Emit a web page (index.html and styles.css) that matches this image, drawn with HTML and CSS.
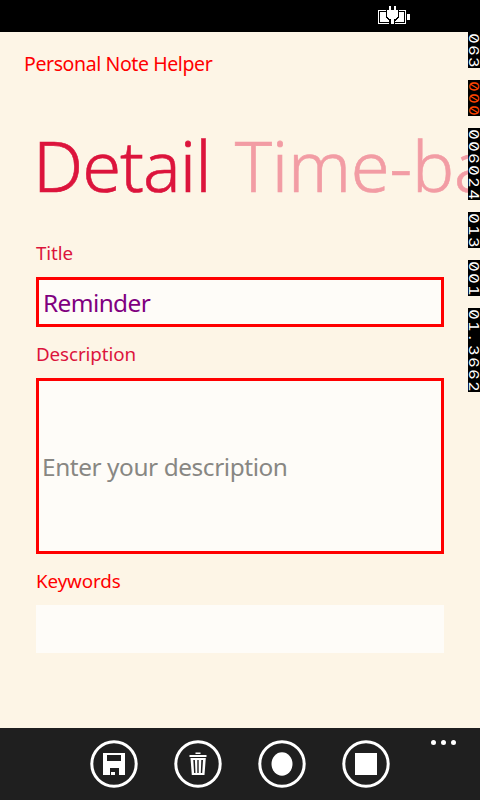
FILE: index.html
```html
<!DOCTYPE html>
<html lang="en">
<head>
<meta charset="utf-8">
<title>Personal Note Helper</title>
<link rel="stylesheet" href="styles.css">
</head>
<body>
<div class="phone">
  <header class="status">
    <svg class="battery" width="32" height="18" viewBox="0 0 32 18" shape-rendering="crispEdges">
      <rect x=".5" y="4.5" width="27" height="13" fill="none" stroke="#fff"/>
      <path fill="#fff" d="M2 6h24v10H2zM29 8h3v6h-3z"/>
      <path fill="#000" d="M8 3h13v9l-4 3v3h-6v-3l-3-3z"/>
      <path fill="#fff" d="M11 0h2v4h3V0h2v4h2v7h-1v1h-1v1h-2v5h-3v-5h-2v-1h-1v-1H9V4h2z"/>
    </svg>
  </header>
  <main class="page">
    <h1 class="app-title">Personal Note Helper</h1>
    <nav class="pivot"><span class="tab active">Detail</span><span class="tab">Time-based</span></nav>
    <form class="form">
      <label class="label">Title</label>
      <div class="field title"><span>Reminder</span></div>
      <label class="label">Description</label>
      <div class="field description"><span>Enter your description</span></div>
      <label class="label keywords">Keywords</label>
      <div class="field plain"></div>
    </form>
  </main>
  <footer class="appbar">
    <svg class="button" viewBox="0 0 48 48"><circle cx="24" cy="24" r="22.2"/><path fill-rule="evenodd" d="M13 13h22v22h-6v-7h-9v7h-7zM17 15v6h14v-6zM21 32h4v3h-4z"/></svg>
    <svg class="button" viewBox="0 0 48 48"><circle cx="24" cy="24" r="22.2"/><path fill-rule="evenodd" d="M21.500 12.400h5v1.500h-5zM15.500 14.900h17v2.100h-17zM16.500 18h15.300l-1.300 17H17.800zM19.300 20l.8 13h1.400L20.900 20zM23.300 20v13h1.400V20zM27.300 20l-.5 13h1.400l.8-13z"/></svg>
    <svg class="button" viewBox="0 0 48 48"><circle cx="24" cy="24" r="22.2"/><ellipse cx="24" cy="24" rx="10.500" ry="11.700"/></svg>
    <svg class="button" viewBox="0 0 48 48"><circle cx="24" cy="24" r="22.2"/><path d="M13 13h22v22H13z"/></svg>
    <div class="more"><i></i><i></i><i></i></div>
  </footer>
  <aside class="counters">
    <div class="counter"><b>0</b><b>6</b><b>3</b></div>
    <div class="counter hot"><b>0</b><b>0</b><b>0</b></div>
    <div class="counter"><b>0</b><b>0</b><b>6</b><b>0</b><b>2</b><b>4</b></div>
    <div class="counter"><b>0</b><b>1</b><b>3</b></div>
    <div class="counter"><b>0</b><b>0</b><b>1</b></div>
    <div class="counter"><b>0</b><b>1</b><b>.</b><b>3</b><b>6</b><b>6</b><b>2</b></div>
  </aside>
</div>
</body>
</html>
```
FILE: styles.css
```css
* { box-sizing: border-box; }
body { margin: 0; font-family: "Noto Sans", "Open Sans", sans-serif; }
.phone { position: relative; display: flex; flex-direction: column; width: 480px; height: 800px; overflow: hidden; background: #fdf5e6; }
.status { height: 32px; flex: none; background: #000; padding: 6px 0 0 378px; }
.battery { display: block; }
.page { flex: 1; min-height: 0; }
.app-title { margin: 18px 0 0 24px; height: 28px; font-size: 19.5px; line-height: 28px; font-weight: 400; color: red; letter-spacing: -.4px; white-space: nowrap; }
.pivot { display: flex; gap: 24px; height: 100px; margin: 37px 0 0 33px; font-size: 70.5px; line-height: 100px; font-weight: 300; color: #f29ca4; white-space: nowrap; letter-spacing: -.25px; -webkit-text-stroke: .6px currentColor; }
.active { color: #dc143c; letter-spacing: -1px; }
.form { display: flex; flex-direction: column; margin: 24px 36px 0; }
.label { height: 28px; font-size: 18.8px; line-height: 28px; color: #dc143c; letter-spacing: -.1px; margin-bottom: 10px; }
.label.keywords { color: red; }
.field { display: flex; align-items: center; background: #fefcf8; border: 3px solid red; padding-left: 4px; font-size: 24.4px; white-space: nowrap; }
.field.title { height: 50px; color: purple; margin-bottom: 13px; letter-spacing: -.6px; }
.field.description { height: 176px; color: #888783; margin-bottom: 13px; padding-left: 3px; letter-spacing: -.42px; }
.field.plain { height: 48px; border: 0; }
.appbar { position: relative; display: flex; gap: 36px; height: 72px; flex: none; background: #1f1f1f; padding: 12px 0 0 90px; }
.button { width: 48px; height: 48px; fill: #fff; }
.button circle { fill: none; stroke: #fff; stroke-width: 3; }
.more { position: absolute; top: 12px; right: 24px; display: flex; gap: 5px; }
.more i { width: 5px; height: 5px; border-radius: 50%; background: #fff; }
.counters { position: absolute; top: 32px; right: 0; display: flex; flex-direction: column; gap: 12px; }
.counter { display: flex; writing-mode: vertical-rl; width: 12px; background: #000; color: #fff; font: 400 13.5px/12px Inter, sans-serif; font-feature-settings: "zero", "tnum"; }
.counter b { display: flex; justify-content: center; width: 12px; height: 12px; font-weight: 400; transform: scaleY(1.2); }
.counter.hot { color: #ff4500; }
```
